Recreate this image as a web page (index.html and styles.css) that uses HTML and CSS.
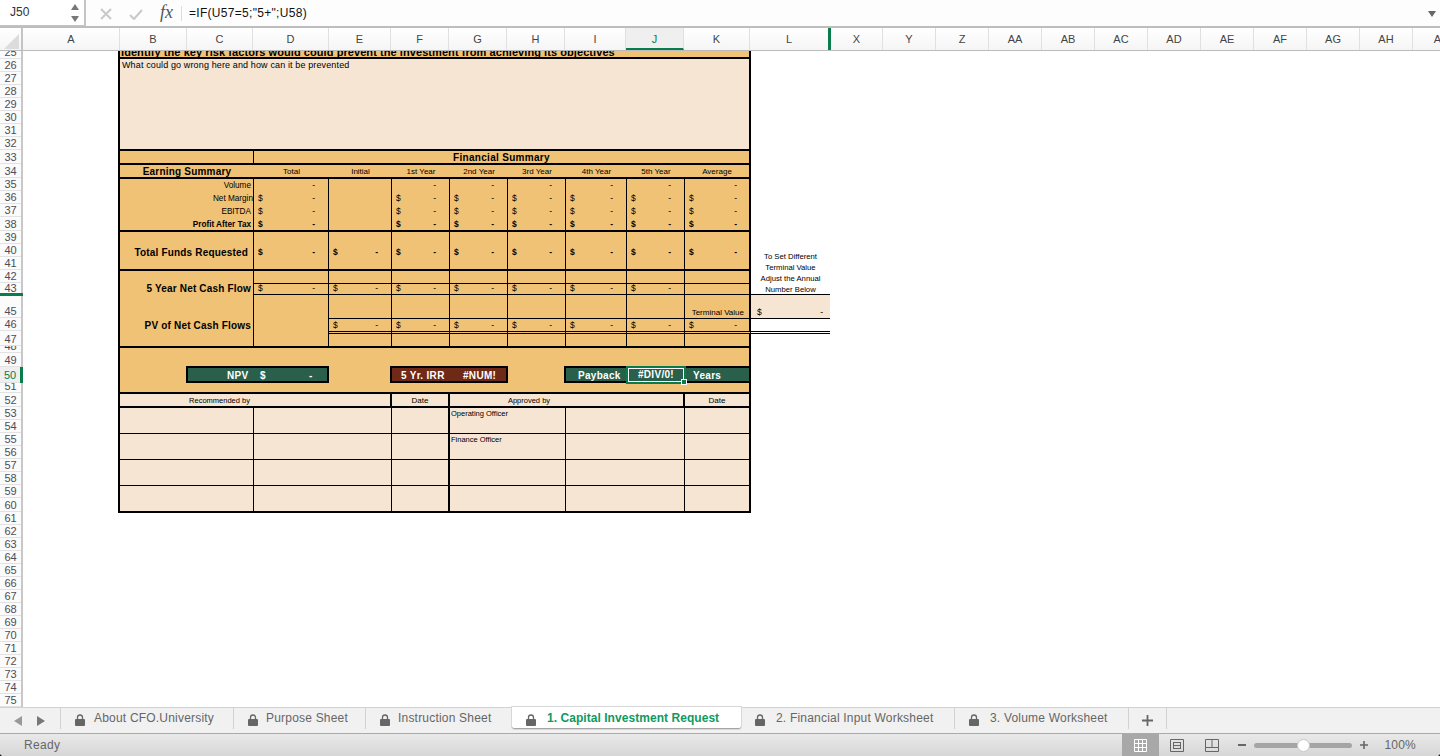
FILE: index.html
```html
<!DOCTYPE html>
<html lang="en">
<head>
<meta charset="utf-8">
<title>Capital Investment Request</title>
<link rel="stylesheet" href="styles.css">
</head>
<body>
<div class="app">
  <header class="formula">
    <div class="namebox">
      <span>J50</span>
      <svg class="stepper" width="8" height="19" viewBox="0 0 8 19"><path d="M4 0L8 6H0Z" fill="#777"/><path d="M0 12H8L4 18Z" fill="#777"/></svg>
    </div>
    <svg class="fxicon cancel" width="12" height="12" viewBox="0 0 12 12"><path d="M1 1L11 11M11 1L1 11" stroke="#c9c9c9" stroke-width="2" fill="none"/></svg>
    <svg class="fxicon accept" width="14" height="11" viewBox="0 0 14 11"><path d="M1 6L5 10L13 1" stroke="#c9c9c9" stroke-width="2" fill="none"/></svg>
    <span class="fx">fx</span>
    <span class="fxsep"></span>
    <span class="ftext">=IF(U57=5;"5+";U58)</span>
    <svg class="fdrop" width="8" height="6" viewBox="0 0 8 6"><path d="M0 0H8L4 6Z" fill="#666"/></svg>
  </header>

  <div class="colhead">
    <div class="corner"><svg width="16" height="16" viewBox="0 0 16 16"><path d="M16 1V16H1Z" fill="#dcdcdc"/></svg></div>
    <div class="ch">A</div><div class="ch">B</div><div class="ch">C</div><div class="ch">D</div><div class="ch">E</div><div class="ch">F</div><div class="ch">G</div><div class="ch">H</div><div class="ch">I</div><div class="ch active">J</div><div class="ch">K</div><div class="ch gap">L</div><div class="ch">X</div><div class="ch">Y</div><div class="ch">Z</div><div class="ch">AA</div><div class="ch">AB</div><div class="ch">AC</div><div class="ch">AD</div><div class="ch">AE</div><div class="ch">AF</div><div class="ch">AG</div><div class="ch">AH</div><div class="ch">AI</div>
  </div>

  <main class="main">
    <div class="rowhead">
      <div class="rh h8">25</div>
      <div class="rh">26</div><div class="rh">27</div><div class="rh">28</div><div class="rh">29</div><div class="rh">30</div><div class="rh">31</div><div class="rh">32</div>
      <div class="rh h14">33</div><div class="rh h14">34</div>
      <div class="rh">35</div><div class="rh">36</div><div class="rh">37</div><div class="rh h14">38</div>
      <div class="rh">39</div><div class="rh">40</div><div class="rh">41</div><div class="rh">42</div>
      <div class="rh h10">43</div>
      <div class="rmark"></div>
      <div class="rh h22">45</div><div class="rh">46</div><div class="rh h15">47</div>
      <div class="rh h7">48</div><div class="rh h14">49</div>
      <div class="rh h16 cur">50</div>
      <div class="rh h10b">51</div><div class="rh h14">52</div>
      <div class="rh">53</div><div class="rh">54</div><div class="rh">55</div><div class="rh">56</div><div class="rh">57</div><div class="rh">58</div><div class="rh">59</div><div class="rh h14">60</div>
      <div class="rh">61</div><div class="rh">62</div><div class="rh">63</div><div class="rh">64</div><div class="rh">65</div><div class="rh">66</div><div class="rh">67</div><div class="rh">68</div><div class="rh">69</div><div class="rh">70</div><div class="rh">71</div><div class="rh">72</div><div class="rh">73</div><div class="rh">74</div><div class="rh">75</div>
    </div>

    <div class="sheet">
      <div class="form">
        <!-- 25 -->
        <div class="c b k s9 bb2 title"><span>Identify the key risk factors would could prevent the investment from achieving its objectives</span></div>
        <!-- 26 -->
        <div class="c b k s9 bb2 peach note">What could go wrong here and how can it be prevented</div>
        <!-- 33 -->
        <div class="c b bb2"></div>
        <div class="c k s8 bb2 fin">Financial Summary</div>
        <!-- 34 -->
        <div class="c b nor bb2 earn">Earning Summary</div>
        <div class="c nor bb2 hd">Total</div><div class="c nor bb2 hd">Initial</div><div class="c nor bb2 hd">1st Year</div><div class="c nor bb2 hd">2nd Year</div><div class="c nor bb2 hd">3rd Year</div><div class="c nor bb2 hd">4th Year</div><div class="c nor bb2 hd">5th Year</div><div class="c k bb2 hd">Average</div>
        <!-- 35 -->
        <div class="c b lab">Volume</div>
        <div class="c end"><span>-</span></div><div class="c"></div><div class="c end"><span>-</span></div><div class="c end"><span>-</span></div><div class="c end"><span>-</span></div><div class="c end"><span>-</span></div><div class="c end"><span>-</span></div><div class="c k end"><span>-</span></div>
        <!-- 36 -->
        <div class="c b lab tight">Net Margin</div>
        <div class="c"><span>$</span><span>-</span></div><div class="c"></div><div class="c"><span>$</span><span>-</span></div><div class="c"><span>$</span><span>-</span></div><div class="c"><span>$</span><span>-</span></div><div class="c"><span>$</span><span>-</span></div><div class="c"><span>$</span><span>-</span></div><div class="c k"><span>$</span><span>-</span></div>
        <!-- 37 -->
        <div class="c b lab">EBITDA</div>
        <div class="c"><span>$</span><span>-</span></div><div class="c"></div><div class="c"><span>$</span><span>-</span></div><div class="c"><span>$</span><span>-</span></div><div class="c"><span>$</span><span>-</span></div><div class="c"><span>$</span><span>-</span></div><div class="c"><span>$</span><span>-</span></div><div class="c k"><span>$</span><span>-</span></div>
        <!-- 38 -->
        <div class="c b lab bold bb2">Profit After Tax</div>
        <div class="c bold bb2"><span>$</span><span>-</span></div><div class="c bb2"></div><div class="c bold bb2"><span>$</span><span>-</span></div><div class="c bold bb2"><span>$</span><span>-</span></div><div class="c bold bb2"><span>$</span><span>-</span></div><div class="c bold bb2"><span>$</span><span>-</span></div><div class="c bold bb2"><span>$</span><span>-</span></div><div class="c k bold bb2"><span>$</span><span>-</span></div>
        <!-- 39-41 -->
        <div class="c b big funds bb2">Total Funds Requested</div>
        <div class="c mid bold bb2"><span>$</span><span>-</span></div><div class="c mid bold bb2"><span>$</span><span>-</span></div><div class="c mid bold bb2"><span>$</span><span>-</span></div><div class="c mid bold bb2"><span>$</span><span>-</span></div><div class="c mid bold bb2"><span>$</span><span>-</span></div><div class="c mid bold bb2"><span>$</span><span>-</span></div><div class="c mid bold bb2"><span>$</span><span>-</span></div><div class="c k mid bold bb2"><span>$</span><span>-</span></div>
        <!-- 42-43 -->
        <div class="c b big net r2">5 Year Net Cash Flow</div>
        <div class="c bb1"></div><div class="c bb1"></div><div class="c bb1"></div><div class="c bb1"></div><div class="c bb1"></div><div class="c bb1"></div><div class="c bb1"></div><div class="c k bb1"></div>
        <div class="c bb1"><span>$</span><span>-</span></div><div class="c bb1"><span>$</span><span>-</span></div><div class="c bb1"><span>$</span><span>-</span></div><div class="c bb1"><span>$</span><span>-</span></div><div class="c bb1"><span>$</span><span>-</span></div><div class="c bb1"><span>$</span><span>-</span></div><div class="c bb1"><span>$</span><span>-</span></div><div class="c k bb1"></div>
        <!-- 45-47 -->
        <div class="c b big pv r3 bb2">PV of Net Cash Flows</div>
        <div class="c r3 bb2"></div>
        <div class="c bb1"></div><div class="c bb1"></div><div class="c bb1"></div><div class="c bb1"></div><div class="c bb1"></div><div class="c bb1"></div><div class="c k bb1 term">Terminal Value</div>
        <div class="c dbl"><span>$</span><span>-</span></div><div class="c dbl"><span>$</span><span>-</span></div><div class="c dbl"><span>$</span><span>-</span></div><div class="c dbl"><span>$</span><span>-</span></div><div class="c dbl"><span>$</span><span>-</span></div><div class="c dbl"><span>$</span><span>-</span></div><div class="c k dbl"><span>$</span><span>-</span></div>
        <div class="c bb2"></div><div class="c bb2"></div><div class="c bb2"></div><div class="c bb2"></div><div class="c bb2"></div><div class="c bb2"></div><div class="c k bb2"></div>
        <!-- 48-51 -->
        <div class="c b k s9 bb2 kpis">
          <div class="kpi green npv"><span class="npv-l">NPV</span><span class="npv-d">$</span><span>-</span></div>
          <div class="kpi brown irr"><span>5 Yr. IRR</span><span>#NUM!</span></div>
          <div class="kpi green pay">
            <span class="pay-l">Payback</span>
            <span class="sel">#DIV/0!<i class="handle"></i></span>
            <span class="pay-y">Years</span>
          </div>
        </div>
        <!-- 52 -->
        <div class="c b s3 peach bb2 th2 rec">Recommended by</div>
        <div class="c peach bb2 th2">Date</div>
        <div class="c s4 peach bb2 th2 app-by">Approved by</div>
        <div class="c k peach bb2 th2">Date</div>
        <!-- 53-60 -->
        <div class="c b peach bb1"></div><div class="c s2 peach bb1"></div><div class="c peach bb1 thickr"></div><div class="c s2 peach bb1 off">Operating Officer</div><div class="c s2 peach bb1"></div><div class="c k peach bb1"></div>
        <div class="c b peach bb1"></div><div class="c s2 peach bb1"></div><div class="c peach bb1 thickr"></div><div class="c s2 peach bb1 off">Finance Officer</div><div class="c s2 peach bb1"></div><div class="c k peach bb1"></div>
        <div class="c b peach bb1"></div><div class="c s2 peach bb1"></div><div class="c peach bb1 thickr"></div><div class="c s2 peach bb1"></div><div class="c s2 peach bb1"></div><div class="c k peach bb1"></div>
        <div class="c b peach bb2"></div><div class="c s2 peach bb2"></div><div class="c peach bb2 thickr"></div><div class="c s2 peach bb2"></div><div class="c s2 peach bb2"></div><div class="c k peach bb2"></div>
      </div>

      <aside class="side">
        <div class="hint">To Set Different<br>Terminal Value<br>Adjust the Annual<br>Number Below</div>
        <div class="tv"><span>$</span><span>-</span></div>
        <div class="tvgap"></div>
      </aside>
    </div>
  </main>

  <nav class="tabs">
    <div class="arrows">
      <svg width="8" height="10" viewBox="0 0 8 10"><path d="M8 0V10L0 5Z" fill="#999"/></svg>
      <svg width="8" height="10" viewBox="0 0 8 10"><path d="M0 0V10L8 5Z" fill="#777"/></svg>
    </div>
    <div class="tab t1"><svg class="lock" width="10" height="12" viewBox="0 0 10 12"><path d="M2.5 5V3.5a2.5 2.5 0 0 1 5 0V5" stroke="#666" stroke-width="1.3" fill="none"/><rect y="5" width="10" height="7" rx="1" fill="#666"/></svg><span>About CFO.University</span></div>
    <div class="tab t2"><svg class="lock" width="10" height="12" viewBox="0 0 10 12"><path d="M2.5 5V3.5a2.5 2.5 0 0 1 5 0V5" stroke="#666" stroke-width="1.3" fill="none"/><rect y="5" width="10" height="7" rx="1" fill="#666"/></svg><span>Purpose Sheet</span></div>
    <div class="tab t3"><svg class="lock" width="10" height="12" viewBox="0 0 10 12"><path d="M2.5 5V3.5a2.5 2.5 0 0 1 5 0V5" stroke="#666" stroke-width="1.3" fill="none"/><rect y="5" width="10" height="7" rx="1" fill="#666"/></svg><span>Instruction Sheet</span></div>
    <div class="tab on"><svg class="lock" width="10" height="12" viewBox="0 0 10 12"><path d="M2.5 5V3.5a2.5 2.5 0 0 1 5 0V5" stroke="#666" stroke-width="1.3" fill="none"/><rect y="5" width="10" height="7" rx="1" fill="#666"/></svg><span>1. Capital Investment Request</span></div>
    <div class="tab t5"><svg class="lock" width="10" height="12" viewBox="0 0 10 12"><path d="M2.5 5V3.5a2.5 2.5 0 0 1 5 0V5" stroke="#666" stroke-width="1.3" fill="none"/><rect y="5" width="10" height="7" rx="1" fill="#666"/></svg><span>2. Financial Input Worksheet</span></div>
    <div class="tab t6"><svg class="lock" width="10" height="12" viewBox="0 0 10 12"><path d="M2.5 5V3.5a2.5 2.5 0 0 1 5 0V5" stroke="#666" stroke-width="1.3" fill="none"/><rect y="5" width="10" height="7" rx="1" fill="#666"/></svg><span>3. Volume Worksheet</span></div>
    <div class="tabadd"><svg width="11" height="11" viewBox="0 0 11 11"><path d="M5.5 0V11M0 5.5H11" stroke="#666" stroke-width="1.8"/></svg></div>
  </nav>

  <footer class="status">
    <span class="ready">Ready</span>
    <div class="viewbtn sel-view"><svg width="13" height="13" viewBox="0 0 13 13"><path d="M.5.5H12.500V12.500H.5ZM4.500.5V12.500M8.500.5V12.500M.5 4.500H12.500M.5 8.500H12.500" stroke="#fff" fill="none"/></svg></div>
    <div class="viewbtn page"><svg width="14" height="13" viewBox="0 0 14 13"><path d="M.5.5H13.500V12.500H.5ZM4 3.500H10M4 6.500H10M4 9.500H10M3.500 3V10M10.500 3V10" stroke="#666" fill="none"/></svg></div>
    <div class="viewbtn brk"><svg width="14" height="13" viewBox="0 0 14 13"><path d="M.5.5H13.500V12.500H.5ZM7 .5V8.500M.5 8.500H13.500" stroke="#666" fill="none"/></svg></div>
    <div class="zoombtn"><svg width="8" height="2" viewBox="0 0 8 2"><path d="M0 1H8" stroke="#666" stroke-width="2"/></svg></div>
    <div class="slider"><span class="thumb"></span></div>
    <div class="zoombtn"><svg width="8" height="8" viewBox="0 0 8 8"><path d="M4 0V8M0 4H8" stroke="#666" stroke-width="1.600"/></svg></div>
    <span class="pct">100%</span>
  </footer>
</div>
</body>
</html>
```
FILE: styles.css
```css
* { box-sizing: border-box; }
html, body { margin: 0; padding: 0; height: 100%; background: #222; overflow: hidden; }
body { font-family: "Liberation Sans", Arial, sans-serif; color: #000; }
.app { width: 1440px; height: 756px; display: flex; flex-direction: column; background: #fff; overflow: hidden; border-radius: 0 0 4px 4px; }

/* formula bar */
.formula { height: 28px; flex: none; display: flex; align-items: flex-start; background: #fdfdfd; border-bottom: 2px solid #bdbdbd; }
.namebox { width: 86px; height: 26px; display: flex; align-items: center; justify-content: space-between; padding: 0 5px 1px 10px; background: #fff; border-right: 2px solid #c4c4c4; border-bottom: 1px solid #c4c4c4; font-size: 12px; color: #333; }
.stepper { margin-top: 2px; }
.fxicon { margin-top: 8px; }
.cancel { margin-left: 14px; }
.accept { margin-left: 17px; margin-top: 9px; }
.fx { margin-left: 17px; width: 15px; font: italic 18px/25px "Liberation Serif", serif; color: #555; }
.fxsep { margin: 6px 0 0 6px; width: 1px; height: 15px; background: #ddd; }
.ftext { margin-left: 7px; font-size: 12px; line-height: 27px; color: #111; letter-spacing: .3px; }
.fdrop { margin: 11px 4px 0 auto; }

/* column headings */
.colhead { height: 23px; flex: none; display: grid; grid-template-columns: 23px 97px 67px 66px 76px 62px 58px 58px 58px 61px 58px 66px 81px 52px repeat(11, 53px); grid-template-rows: 22px; background: linear-gradient(#fff, #f5f5f5); border-bottom: 1px solid #bbb; overflow: hidden; }
.corner { border-right: 2px solid #c4c4c4; display: flex; align-items: flex-end; justify-content: center; padding-bottom: 1px; }
.ch { height: 22px; font-size: 11px; line-height: 22px; text-align: center; color: #444; border-right: 1px solid #e0e0e0; }
.ch.active { background: #efefef; color: #0a7c4c; border-bottom: 2px solid #0a7c4c; }
.ch.gap { border-right: 3px solid #0a7c4c; }

/* body */
.main { height: 656px; flex: none; display: flex; overflow: hidden; }
.rowhead { width: 23px; flex: none; background: #fbfbfb; border-right: 2px solid #c8c8c8; }
.rh { height: 13px; display: flex; align-items: flex-end; justify-content: center; overflow: hidden; font-size: 11px; line-height: 13px; color: #4d4d58; box-shadow: inset 0 -1px 0 #e2e2e2; }
.h7 { height: 7px; }
.h8 { height: 8px; }
.h10 { height: 10px; align-items: flex-start; line-height: 11px; box-shadow: none; }
.h10b { height: 10px; }
.h14 { height: 14px; }
.h15 { height: 15px; }
.h16 { height: 16px; padding-bottom: 1px; }
.h22 { height: 22px; }
.rmark { height: 3px; width: 23px; background: #0a7c4c; }
.rh.cur { background: #efefef; color: #0a7c4c; width: 23px; border-right: 3px solid #0a7c4c; }

.sheet { flex: 1; display: flex; align-items: flex-start; padding-left: 95px; }
.form { width: 633px; display: grid; grid-template-columns: 136px 75px 63px 58px 58px 58px 61px 58px 66px; grid-template-rows: 8px 92px 14px 14px 12px 13px 13px 15px 39px 13px 11px 24px 15px 14px 46px 14px 26px 26px 26px 27px; }

.c { background: #f0c275; border-right: 1px solid #000; display: flex; justify-content: space-between; align-items: flex-end; padding: 0 13px 0 4px; font-size: 8.5px; line-height: 11px; min-width: 0; overflow: hidden; white-space: nowrap; }
.b { border-left: 2px solid #000; }
.k { border-right: 2px solid #000; padding-right: 12px; }
.s2 { grid-column: span 2; }
.s3 { grid-column: span 3; }
.s4 { grid-column: span 4; }
.s8 { grid-column: span 8; }
.s9 { grid-column: span 9; }
.r2 { grid-row: span 2; }
.r3 { grid-row: span 3; }
.bb1 { border-bottom: 1px solid #000; }
.bb2 { border-bottom: 2px solid #000; }
.dbl { border-bottom: 3px double #000; }
.nor { border-right: 0; }
.peach { background: #f5e5d2; }
.bold { font-weight: 700; }
.end { justify-content: flex-end; }
.mid { align-items: center; padding-top: 3px; }

.title { padding: 0 0 0 1px; align-items: flex-start; font-size: 11px; font-weight: 700; letter-spacing: .07px; }
.title span { display: block; margin-top: -4px; line-height: 10px; }
.note { align-items: flex-start; padding: 1px 0 0 2px; font-size: 9px; letter-spacing: .13px; }
.fin { justify-content: center; align-items: center; padding: 0; font-size: 10px; font-weight: 700; letter-spacing: .3px; }
.earn { justify-content: center; align-items: center; padding: 0; font-size: 10px; font-weight: 700; letter-spacing: .2px; }
.hd { justify-content: center; align-items: center; padding: 0; font-size: 8px; }
.lab { justify-content: flex-end; padding-right: 2px; font-size: 8.2px; }
.tight { padding-right: 0; }
.big { justify-content: flex-end; font-size: 10px; font-weight: 700; letter-spacing: .18px; line-height: 13px; }
.funds { padding: 3px 5px 0 0; align-items: center; }
.net { padding: 0 2px 0 0; align-items: flex-end; line-height: 12px; }
.pv { padding: 24px 2px 0 0; align-items: flex-start; }
.term { justify-content: flex-end; padding-right: 5px; font-size: 8px; }

.kpis { justify-content: flex-start; align-items: flex-start; padding: 18px 0 0 66px; overflow: visible; }
.kpi { height: 17px; display: flex; align-items: center; padding-top: 1px; color: #fff; font-size: 10px; font-weight: 700; letter-spacing: .3px; line-height: 13px; border: 2px solid #000; }
.green { background: #2a5f4c; }
.brown { background: #6e2917; }
.npv { width: 143px; padding-left: 39px; margin-right: 61px; }
.npv-l { width: 33px; }
.npv-d { width: 49px; }
.irr { width: 118px; padding-left: 9px; margin-right: 56px; justify-content: flex-start; }
.irr span:first-child { width: 62px; }
.pay { width: 185px; padding-left: 12px; border-right: 0; overflow: visible; }
.pay-l { width: 48px; }
.sel { position: relative; width: 60px; height: 18px; margin-top: -3px; margin-bottom: -2px; align-self: flex-start; text-align: center; line-height: 14px; border: 2px solid #0a7c4c; box-shadow: inset 0 0 0 1px #fff; }
.handle { position: absolute; right: -3px; bottom: -3px; width: 6px; height: 6px; background: #0a7c4c; border: 1px solid #fff; }
.pay-y { padding-left: 7px; }

.th2 { justify-content: center; align-items: center; padding: 0; font-size: 8px; border-right-width: 2px; }
.rec { padding-right: 71px; font-size: 7.5px; }
.app-by { padding-right: 75px; font-size: 7.5px; }
.thickr { border-right: 2px solid #000; }
.off { justify-content: flex-start; align-items: flex-start; padding: 0 0 0 1px; font-size: 7.500px; }

/* side notes */
.side { width: 79px; flex: none; padding-top: 200px; font-size: 7.700px; }
.hint { height: 44px; text-align: center; line-height: 11px; border-bottom: 1px solid #000; }
.tv { height: 24px; display: flex; justify-content: space-between; align-items: flex-end; padding: 0 7px 0 6px; background: #f5e5d2; border-bottom: 1px solid #000; font-size: 8.5px; line-height: 11px; }
.tvgap { height: 15px; border-bottom: 3px double #000; }

/* sheet tabs */
.tabs { height: 27px; flex: none; display: flex; align-items: flex-start; background: #f1f1f1; border-top: 1px solid #d2d2d2; border-bottom: 1px solid #aaa; color: #666; font-size: 12px; letter-spacing: .2px; }
.arrows { width: 61px; height: 21px; display: flex; align-items: center; gap: 15px; padding: 5px 0 0 14px; border-right: 1px solid #d2d2d2; }
.tab { height: 21px; display: flex; align-items: flex-start; gap: 9px; padding: 4px 0 0 14px; border-right: 1px solid #d2d2d2; line-height: 13px; white-space: nowrap; }
.lock { margin-top: 2px; flex: none; }
.t1 { width: 173px; }
.t2 { width: 132px; gap: 8px; }
.t3 { width: 146px; gap: 8px; border-right: 0; }
.tab.on { width: 229px; height: 22px; margin-top: -1px; padding-top: 5px; gap: 11px; background: #fff; border-right: 0; border-bottom: 1px solid #a5a5a5; border-radius: 0 0 3px 3px; box-shadow: 0 0 0 1px #d8d8d8; color: #0e9a5f; font-weight: 700; letter-spacing: .05px; }
.t5 { width: 214px; gap: 11px; }
.t6 { width: 174px; gap: 11px; }
.tabadd { width: 38px; height: 21px; display: flex; justify-content: center; padding-top: 7px; border-right: 1px solid #d2d2d2; }

/* status bar */
.status { flex: 1; display: flex; align-items: stretch; padding-right: 24px; background: linear-gradient(#e9e9e9, #d6d6d6); font-size: 12px; color: #666; }
.ready { padding-left: 24px; margin-right: auto; line-height: 22px; letter-spacing: .3px; }
.viewbtn { display: flex; align-items: center; justify-content: center; }
.sel-view { width: 37px; background: #a8a8a8; }
.page { width: 35px; }
.brk { width: 36px; }
.zoombtn { width: 24px; display: flex; align-items: center; justify-content: center; }
.slider { position: relative; width: 98px; height: 5px; margin-top: 9px; border-radius: 3px; background: #a5a5a5; }
.thumb { position: absolute; left: 43px; top: -4px; width: 13px; height: 13px; border-radius: 50%; background: #fff; border: 1px solid #c8c8c8; }
.pct { width: 40px; text-align: right; line-height: 22px; letter-spacing: .2px; }
```
